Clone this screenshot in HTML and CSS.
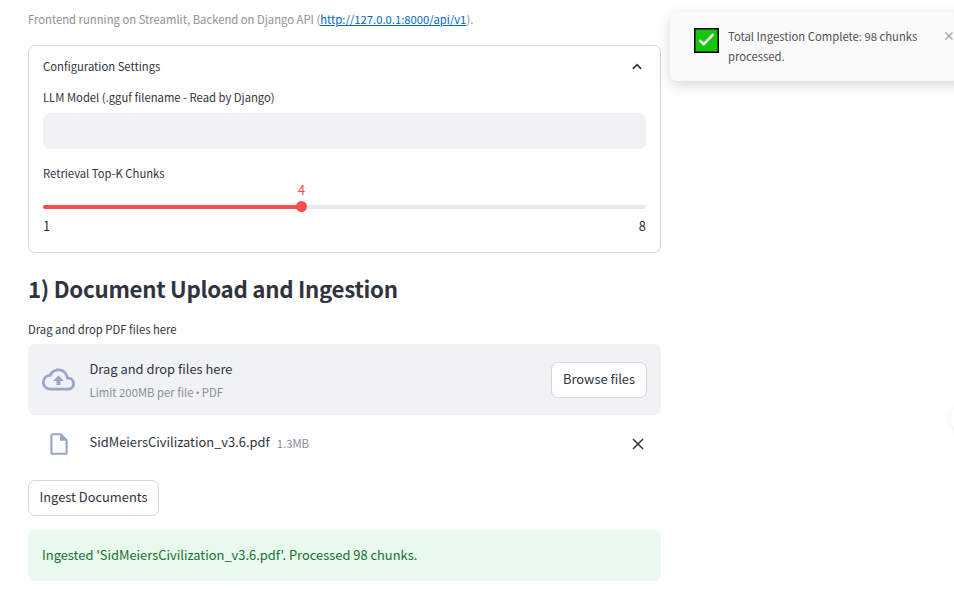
FILE: index.html
```html
<!DOCTYPE html>
<html lang="en">
<head>
<meta charset="utf-8">
<title>Document Ingestion</title>
<link rel="stylesheet" href="styles.css">
</head>
<body>
<main class="main">
  <p class="caption">Frontend running on Streamlit, Backend on Django API (<a href="#">http://127.0.0.1:8000/api/v1</a>).</p>

  <section class="expander">
    <div class="summary"><span class="small">Configuration Settings</span>
      <svg class="chevron" width="18" height="18" viewBox="0 0 24 24"><path d="M6.500 14.500 12 9l5.500 5.500" fill="none" stroke="#31333f" stroke-width="2.200"/></svg>
    </div>
    <label class="small label">LLM Model (.gguf filename - Read by Django)</label>
    <div class="input"></div>
    <label class="small label label-slider">Retrieval Top-K Chunks</label>
    <div class="slider">
      <div class="fill"></div>
      <div class="thumb"><span class="value">4</span></div>
    </div>
    <div class="ticks"><span>1</span><span>8</span></div>
  </section>

  <h3 class="heading">1) Document Upload and Ingestion</h3>

  <label class="small label upload-label">Drag and drop PDF files here</label>
  <section class="dropzone">
    <svg class="cloud" width="33" height="33" viewBox="0 0 24 24" fill="#98a6c8"><path d="M19.350 10.040A7.490 7.490 0 0 0 12 4C9.110 4 6.600 5.640 5.350 8.040A5.994 5.994 0 0 0 0 14c0 3.310 2.690 6 6 6h13c2.760 0 5-2.240 5-5 0-2.640-2.050-4.780-4.650-4.960zM19 18H6c-2.210 0-4-1.790-4-4 0-2.050 1.530-3.760 3.560-3.970l1.070-.11.5-.95A5.469 5.469 0 0 1 12 6c2.620 0 4.880 1.860 5.390 4.430l.3 1.500 1.530.11A2.980 2.980 0 0 1 22 15c0 1.650-1.350 3-3 3zM8 13h2.550v3h2.900v-3H16l-4-4z"/></svg>
    <div class="drop-text">
      <span class="drop-title">Drag and drop files here</span>
      <span class="drop-limit">Limit 200MB per file <span class="dot">•</span> PDF</span>
    </div>
    <button class="btn browse">Browse files</button>
  </section>

  <div class="file">
    <svg class="doc" width="26" height="26" viewBox="0 0 24 24" fill="#98a6c8"><path d="M14 2H6c-1.100 0-1.990.9-1.990 2L4 20c0 1.100.89 2 1.990 2H18c1.100 0 2-.9 2-2V8l-6-6zM6 20V4h7v5h5v11H6z"/></svg>
    <span class="file-name">SidMeiersCivilization_v3.6.pdf</span>
    <span class="file-size">1.3MB</span>
    <svg class="remove" width="12" height="12" viewBox="0 0 12 12"><path d="M1 1l10 10M11 1 1 11" stroke="#31333f" stroke-width="1.500"/></svg>
  </div>

  <button class="btn ingest">Ingest Documents</button>
  <div class="alert"><span>Ingested 'SidMeiersCivilization_v3.6.pdf'. Processed 98 chunks.</span></div>
</main>

<aside class="toast">
  <svg class="check" width="25" height="25" viewBox="0 0 25 25"><rect x=".75" y=".75" width="23.500" height="23.500" fill="#16c60c" stroke="#000" stroke-width="1.500"/><path d="M5.500 12.200 9.700 16.200 19.500 6.200" fill="none" stroke="#fff" stroke-width="2.400"/></svg>
  <p class="toast-text">Total Ingestion Complete: 98 chunks<br>processed.</p>
  <svg class="toast-close" width="8" height="8" viewBox="0 0 8 8"><path d="M.5.5l7 7M7.500.5l-7 7" stroke="#a3a4a9" stroke-width="1.400"/></svg>
</aside>
<div class="orb"></div>
</body>
</html>
```
FILE: styles.css
```css
* { box-sizing: border-box; }
html, body { margin: 0; height: 100%; overflow: hidden; }
body {
  position: relative;
  background: #fff;
  color: #31333f;
  font-family: "Noto Sans CJK SC", "Noto Sans", sans-serif;
  font-size: 12.9px;
  line-height: 20px;
}
p, h3 { margin: 0; }
.main { width: 661px; padding: 9px 0 0 28px; display: flex; flex-direction: column; }
.small { font-size: 11.28px; }
.label { display: block; height: 20px; }
.caption { color: #8f9096; height: 20px; margin-bottom: 16px; font-size: 11.27px; white-space: nowrap; }
.caption a { color: #0068c9; text-decoration: underline; }

.expander { height: 208px; border: 1px solid #d5d6d9; border-radius: 7px; padding: 10px 14px 0; }
.summary { display: flex; justify-content: space-between; align-items: center; height: 20px; margin-bottom: 11px; }
.chevron { margin-top: 1px; }
.input { height: 36px; margin-top: 6px; border-radius: 7px; background: #f0f2f6; }
.label-slider { margin-top: 14px; }
.slider { display: flex; align-items: center; height: 4px; margin-top: 22px; border-radius: 2px; background: #e6e8f0; }
.fill { width: 258.500px; height: 4px; border-radius: 2px; background: #ff4b4b; }
.thumb { position: relative; flex: none; width: 11px; height: 11px; margin: 0 0 1px -5.500px; border-radius: 50%; background: #ff4b4b; }
.value { position: absolute; left: 0; top: -21px; width: 11px; text-align: center; color: #ff4b4b; }
.ticks { display: flex; justify-content: space-between; margin-top: 7px; }

.heading { height: 34px; margin-top: 18px; font-size: 22.3px; line-height: 34px; font-weight: 600; letter-spacing: -.3px; white-space: nowrap; }
.upload-label { margin-top: 14px; }
.dropzone { display: flex; align-items: center; height: 71px; margin-top: 5px; padding: 0 14px; border-radius: 7px; background: #f0f2f6; }
.drop-text { display: flex; flex-direction: column; gap: 3px; margin: 1px 0 0 14.500px; }
.drop-title, .drop-limit { height: 20px; }
.drop-limit { font-size: 11.3px; color: #8b8d97; }
.dot { font-family: "Open Sans", sans-serif; margin: 0 -.5px; line-height: 1; }
.btn { height: 36px; padding: 0 0 2px; border: 1px solid #d5d6d9; border-radius: 7px; background: #fff; color: #31333f; font: inherit; }
.browse { width: 96px; margin-left: auto; }
.file { display: flex; align-items: center; height: 24px; margin-top: 17px; padding: 0 17px 0 18px; }
.file-name { margin: 0 0 4px 17.500px; }
.file-size { margin: 0 0 2px 7px; font-size: 11.3px; color: #8b8d97; }
.remove { margin-left: auto; }
.doc { flex: none; }
.ingest { width: 131px; margin-top: 24px; }
.alert { display: flex; align-items: center; height: 51px; margin-top: 14px; padding: 0 0 2px 14px; border-radius: 7px; background: #e8f9ee; color: #177233; }

.toast { position: absolute; left: 670px; top: 12px; width: 294px; height: 69px; display: flex; align-items: flex-start; padding: 14px 0 0 24px; border-radius: 7px; background: #fafafa; box-shadow: 0 4px 14px rgba(0, 0, 0, .16); color: #50515b; }
.check { flex: none; margin-top: 2px; }
.toast-text { width: 207px; margin-left: 9px; font-size: 11.27px; white-space: nowrap; }
.toast-close { flex: none; margin: 6px 0 0 10px; }
.orb { position: absolute; left: 951px; top: 403px; width: 30px; height: 30px; border-radius: 50%; background: #fff; box-shadow: 0 2px 8px rgba(0, 0, 0, .08); }
```
